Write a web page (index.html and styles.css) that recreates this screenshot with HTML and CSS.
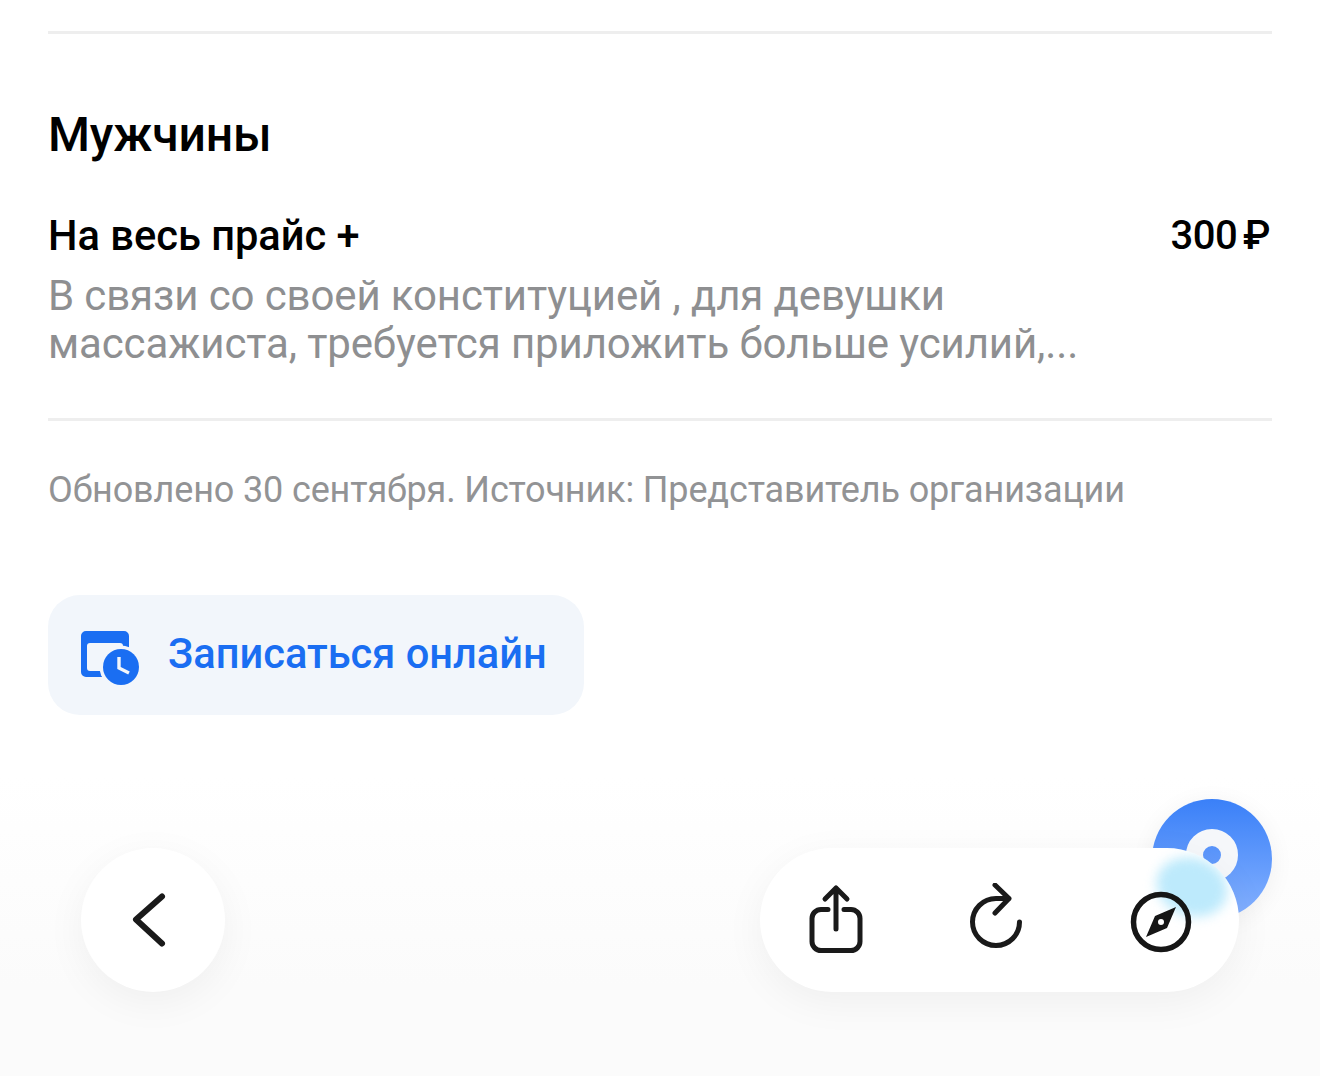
FILE: index.html
```html
<!DOCTYPE html>
<html lang="ru">
<head>
<meta charset="utf-8">
<meta name="viewport" content="width=device-width, initial-scale=1.0">
<title>Мужчины</title>
<link rel="stylesheet" href="styles.css">
</head>
<body>
<div id="main">
  <hr class="line line-top">
  <h2 class="title">Мужчины</h2>
  <div class="price-row">
    <span class="price-name">На весь прайс +</span>
    <span class="price-value">300 ₽</span>
  </div>
  <p class="desc">В связи со своей конституцией , для девушки<br>массажиста, требуется приложить больше усилий,...</p>
  <hr class="line line-bottom">
  <p class="updated">Обновлено 30 сентября. Источник: Представитель организации</p>
  <a class="book" href="#">
    <svg class="book-icon" width="60" height="56" viewBox="0 0 60 56">
      <path fill-rule="evenodd" d="M6 1h38a5 5 0 0 1 5 5v36a5 5 0 0 1-5 5H6a5 5 0 0 1-5-5V6a5 5 0 0 1 5-5zM10 13a3 3 0 0 0-3 3v22a3 3 0 0 0 3 3h30a3 3 0 0 0 3-3V16a3 3 0 0 0-3-3z" fill="#1a6ef2"/>
      <circle cx="41" cy="37" r="21.500" fill="#f2f6fb"/>
      <circle cx="41" cy="37" r="18" fill="#1a6ef2"/>
      <path d="M39 27v11l10 5" fill="none" stroke="#f2f6fb" stroke-width="3.400"/>
    </svg>
    <span class="book-text">Записаться онлайн</span>
  </a>
</div>

<div class="fade"></div>

<div class="fab">
  <div class="fab-ring"></div>
</div>

<button class="back" aria-label="Назад">
  <svg width="36" height="56" viewBox="0 0 36 56"><path d="M31 4.500 5 27.500 31 51.500" fill="none" stroke="#1a1a1a" stroke-width="6" stroke-linecap="round" stroke-linejoin="round"/></svg>
</button>

<div class="toolbar">
  <div class="glow"></div>
  <svg class="tool tool-share" width="56" height="72" viewBox="0 0 56 72">
    <path d="M20 25.500h-7a9 9 0 0 0-9 9v23a9 9 0 0 0 9 9h30a9 9 0 0 0 9-9v-23a9 9 0 0 0-9-9h-7M28 45V4M17 15 28 4l11 11" fill="none" stroke="#1a1a1a" stroke-width="5" stroke-linecap="round" stroke-linejoin="round"/>
  </svg>
  <svg class="tool tool-reload" width="56" height="68" viewBox="0 0 56 68">
    <path d="M50.500 39A23.500 23.500 0 1 1 27 15.500H40M26 2 40 15.500 26 30" fill="none" stroke="#1a1a1a" stroke-width="5" stroke-linecap="round" stroke-linejoin="round"/>
  </svg>
  <svg class="tool tool-compass" width="62" height="62" viewBox="0 0 62 62">
    <circle cx="31" cy="31" r="27.500" fill="none" stroke="#161616" stroke-width="5.500"/>
    <path fill-rule="evenodd" d="M46 16 37 37 16 46 25 25zM31 28a3 3 0 1 0 0 6 3 3 0 0 0 0-6z" fill="#161616"/>
  </svg>
</div>
</body>
</html>
```

FILE: styles.css
```css
body, html {
  margin: 0;
  padding: 0;
  height: 1076px;
  overflow: hidden;
  background: #fff;
}

body {
  font-family: Roboto, sans-serif;
  color: #000;
  position: relative;
}

#main {
  padding: 31px 48px 0;
}

.line {
  margin: 0;
  border: 0;
  height: 3px;
  background: #eeeeee;
}

.title {
  margin: 68px 0 0;
  font-size: 48px;
  line-height: 66px;
  font-weight: 500;
  letter-spacing: -0.15px;
}

.price-row {
  display: flex;
  justify-content: space-between;
  margin-top: 48px;
  font-size: 41.6px;
  line-height: 40px;
  font-weight: 500;
}

.price-value {
  margin-right: 2px;
  font-size: 40px;
  letter-spacing: -0.4px;
  word-spacing: -4px;
}

.desc {
  margin: 16px 0 0;
  font-size: 42px;
  line-height: 48px;
  letter-spacing: -0.12px;
  color: #8e8f91;
}

.line-bottom {
  margin-top: 50px;
}

.updated {
  margin: 48px 0 0;
  font-size: 36px;
  line-height: 42px;
  letter-spacing: -0.14px;
  color: #929395;
}

.book {
  display: inline-flex;
  align-items: center;
  gap: 28px;
  margin-top: 84px;
  width: 536px;
  height: 120px;
  box-sizing: border-box;
  padding-left: 32px;
  border-radius: 32px;
  background: #f2f6fb;
  color: #1a6ef2;
  font-size: 41.6px;
  font-weight: 500;
  text-decoration: none;
}

.book-icon {
  flex: none;
  margin-top: 6px;
}

.book-text {
  margin-bottom: 4px;
}

.fade {
  position: absolute;
  left: 0;
  right: 0;
  bottom: 0;
  height: 300px;
  background: linear-gradient(rgba(251, 251, 251, 0), #fbfbfb 70%);
}

.fab {
  position: absolute;
  left: 1152px;
  top: 799px;
  width: 120px;
  height: 120px;
  border-radius: 50%;
  background: linear-gradient(#3a80f8, #86b2ff);
  box-shadow: 0 4px 24px rgba(0, 0, 0, 0.06);
}

.fab-ring {
  position: absolute;
  left: 34px;
  top: 30px;
  width: 18px;
  height: 18px;
  border: 17px solid #f5f7fa;
  border-radius: 50%;
}

.back {
  position: absolute;
  left: 81px;
  top: 848px;
  width: 144px;
  height: 144px;
  padding: 0 8px 0 0;
  border: 0;
  border-radius: 50%;
  background: #fff;
  box-shadow: 0 10px 40px rgba(0, 0, 0, 0.05);
  display: flex;
  align-items: center;
  justify-content: center;
}

.toolbar {
  position: absolute;
  left: 760px;
  top: 848px;
  width: 479px;
  height: 144px;
  border-radius: 72px;
  background: #fff;
  box-shadow: 0 10px 40px rgba(0, 0, 0, 0.05);
  overflow: hidden;
}

.tool {
  position: absolute;
}

.tool-share {
  left: 48px;
  top: 36px;
}

.tool-reload {
  left: 209px;
  top: 35px;
}

.tool-compass {
  left: 370px;
  top: 43px;
}

.glow {
  position: absolute;
  left: 396px;
  top: 10px;
  width: 72px;
  height: 58px;
  border-radius: 50%;
  background: #bdeafc;
  filter: blur(6px);
  transform: rotate(18deg);
}
```
